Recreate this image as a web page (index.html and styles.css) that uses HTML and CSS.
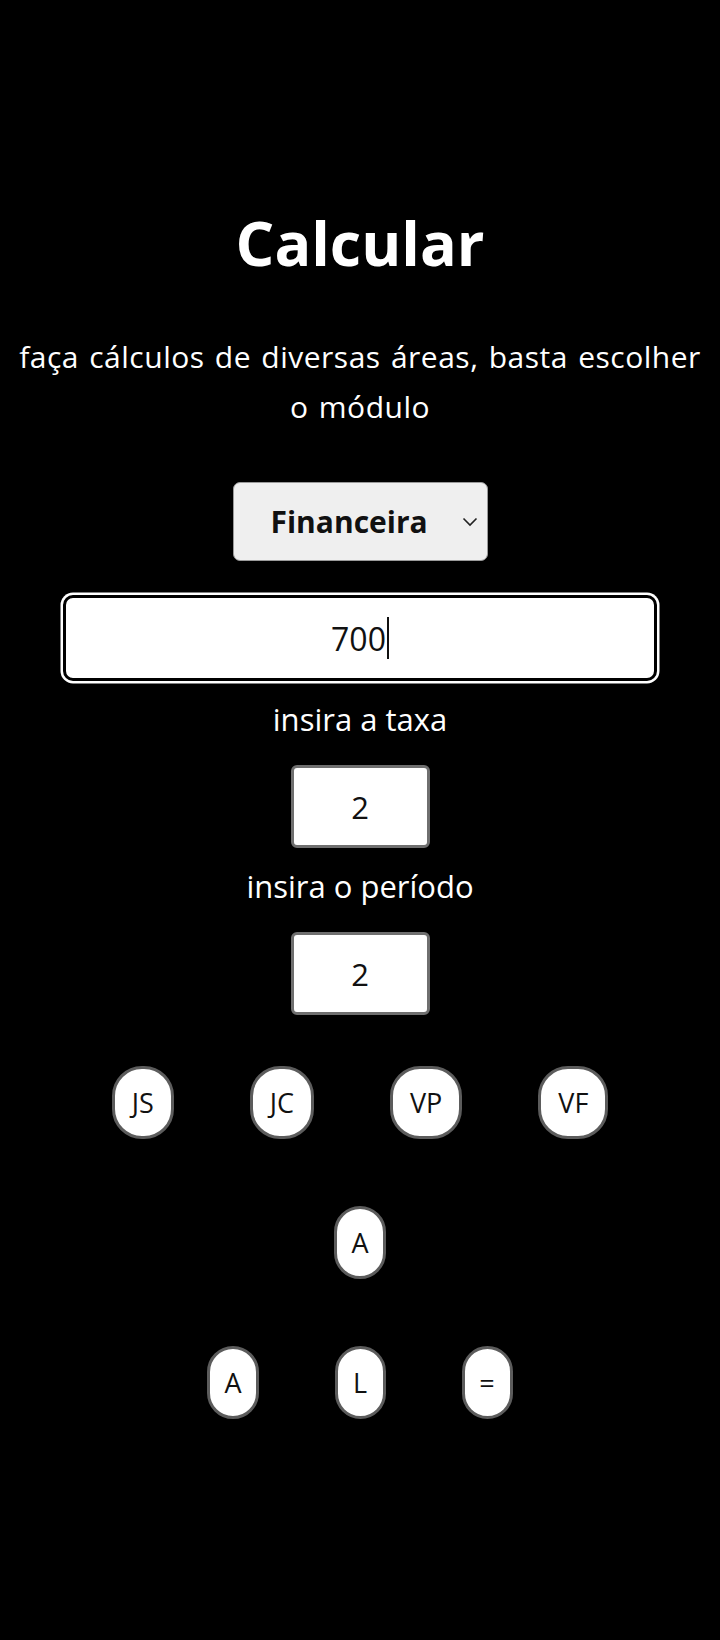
FILE: index.html
```html
<!DOCTYPE html>
<html lang="pt-BR">
<head>
<meta charset="utf-8">
<title>Calcular</title>
<link rel="stylesheet" href="styles.css">
</head>
<body>
<main class="app">
  <h1 class="title">Calcular</h1>
  <p class="subtitle">faça cálculos de diversas áreas, basta escolher o módulo</p>
  <div class="select-wrap">
    <select class="module">
      <option>Financeira</option>
    </select>
    <svg class="chevron" width="16" height="10" viewBox="0 0 16 10"><path d="M1.5 1.5 L8 8 L14.5 1.5" fill="none" stroke="#222" stroke-width="1.6"/></svg>
  </div>
  <div class="main-field"><span class="main-value">700</span><span class="caret"></span></div>
  <label class="field-label">insira a taxa</label>
  <input class="small-input" type="text" value="2">
  <label class="field-label">insira o período</label>
  <input class="small-input" type="text" value="2">
  <div class="btn-row row-first">
    <button class="calc-btn">JS</button>
    <button class="calc-btn">JC</button>
    <button class="calc-btn">VP</button>
    <button class="calc-btn">VF</button>
  </div>
  <div class="btn-row">
    <button class="calc-btn single">A</button>
  </div>
  <div class="btn-row">
    <button class="calc-btn single">A</button>
    <button class="calc-btn single">L</button>
    <button class="calc-btn single">=</button>
  </div>
</main>
</body>
</html>
```

FILE: styles.css
```css
html, body {
  margin: 0;
  padding: 0;
  background: #000;
}
body {
  color: #fff;
  font-family: "Open Sans", Lato, "Liberation Sans", sans-serif;
  min-height: 1640px;
}
.app {
  display: flex;
  flex-direction: column;
  align-items: center;
  padding: 206px 8px 0;
}
.title {
  margin: 0;
  font-size: 61px;
  line-height: 74px;
  font-weight: 700;
}
.subtitle {
  margin: 52px 0 0;
  font-size: 30px;
  line-height: 50px;
  letter-spacing: 0.5px;
  word-spacing: 2px;
  text-align: center;
}
.select-wrap {
  position: relative;
  margin-top: 50px;
}
.module {
  appearance: none;
  -webkit-appearance: none;
  width: 255px;
  height: 79px;
  box-sizing: border-box;
  padding: 0 0 0 37px;
  background: #efefef;
  border: 1.5px solid #9a9a9a;
  border-radius: 7px;
  font-family: inherit;
  font-size: 30px;
  font-weight: 700;
  color: #111;
}
.chevron {
  position: absolute;
  right: 10px;
  top: 35px;
  pointer-events: none;
}
.main-field {
  margin-top: 34px;
  width: 594px;
  height: 86px;
  box-sizing: border-box;
  background: #fff;
  border: 3px solid #000;
  border-radius: 10px;
  box-shadow: 0 0 0 2.5px #fff;
  display: flex;
  align-items: center;
  justify-content: center;
  color: #111;
  font-size: 32px;
}
.caret {
  width: 2px;
  height: 42px;
  background: #111;
  margin-left: 1px;
}
.field-label {
  margin-top: 20px;
  font-size: 31px;
  line-height: 37px;
}
.small-input {
  margin-top: 27px;
  width: 139px;
  height: 83px;
  box-sizing: border-box;
  border: 3px solid #6f6f6f;
  border-radius: 6px;
  background: #fff;
  text-align: center;
  font-family: inherit;
  font-size: 31px;
  color: #111;
  padding: 0;
}
.btn-row {
  display: flex;
  justify-content: center;
  gap: 76px;
  margin-top: 67px;
}
.btn-row.row-first {
  margin-top: 51px;
}
.calc-btn {
  height: 73px;
  padding: 0 17px;
  box-sizing: border-box;
  background: #fff;
  border: 3px solid #5c5c5c;
  border-radius: 30px;
  font-family: inherit;
  font-size: 27px;
  color: #111;
}
.calc-btn.single {
  padding: 0 14px;
  min-width: 51px;
}
```
